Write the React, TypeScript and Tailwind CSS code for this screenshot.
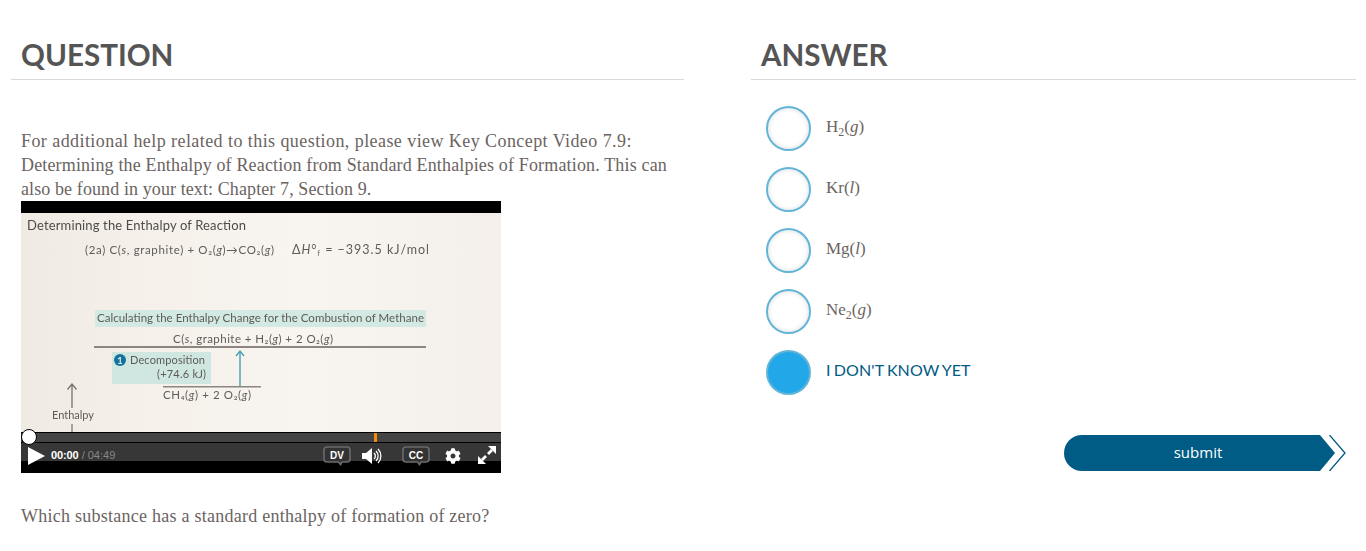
import React from 'react';
import { FaCog } from 'react-icons/fa';

const serif = "font-['Liberation_Serif',serif]";
const lato = "font-['Lato',sans-serif]";

const sub = (text: string) => (
  <sub className="text-[12px] leading-none relative top-[4px] align-baseline">{text}</sub>
);

const answers: { id: string; label: React.ReactNode }[] = [
  { id: 'h2', label: <>H{sub('2')}(<i>g</i>)</> },
  { id: 'kr', label: <>Kr(<i>l</i>)</> },
  { id: 'mg', label: <>Mg(<i>l</i>)</> },
  { id: 'ne', label: <>Ne{sub('2')}(<i>g</i>)</> },
];

function Picture() {
  const ink = '#5f5b56';
  return (
    <svg width="480" height="219" viewBox="0 12 480 219" className="block blur-[0.35px]" fontFamily="Lato, sans-serif">
      <defs>
        <linearGradient id="paper" x1="0" x2="1" y1="0" y2="0">
          <stop offset="0" stopColor="#efeae2" />
          <stop offset="0.25" stopColor="#f5f0e9" />
          <stop offset="0.6" stopColor="#f8f4f0" />
          <stop offset="1" stopColor="#f4efe9" />
        </linearGradient>
      </defs>
      <rect x="0" y="12" width="480" height="219" fill="url(#paper)" />
      <text x="6" y="29" fontSize="13" fill="#4f4b48" textLength="219">Determining the Enthalpy of Reaction</text>
      <text x="64" y="53" fontSize="11.5" fill={ink} textLength="189">
        (2a) C(<tspan fontStyle="italic">s</tspan>, graphite) + O₂(<tspan fontStyle="italic">g</tspan>)→CO₂(<tspan fontStyle="italic">g</tspan>)
      </text>
      <text x="271" y="53" fontSize="12.5" fill={ink} textLength="137">
        Δ<tspan fontStyle="italic">H</tspan>°<tspan fontSize="7" dy="2">f</tspan><tspan dy="-2"> = −393.5 kJ/mol</tspan>
      </text>
      <rect x="74" y="109" width="331" height="17" rx="1" fill="#d3e9e3" />
      <text x="76" y="121" fontSize="11.5" fill={ink} textLength="327">Calculating the Enthalpy Change for the Combustion of Methane</text>
      <text x="152" y="142" fontSize="11.5" fill={ink} textLength="160">
        C(<tspan fontStyle="italic">s</tspan>, graphite + H₂(<tspan fontStyle="italic">g</tspan>) + 2 O₂(<tspan fontStyle="italic">g</tspan>)
      </text>
      <rect x="73" y="145" width="332" height="2" fill="#8b8680" />
      <rect x="91" y="151" width="99" height="32" fill="#cfe6e1" />
      <circle cx="99" cy="159" r="6" fill="#14739b" />
      <text x="99" y="163" fontSize="10" fill="#fff" textAnchor="middle">1</text>
      <text x="109" y="163" fontSize="11" fill={ink} textLength="75">Decomposition</text>
      <text x="136" y="177" fontSize="11" fill={ink} textLength="49">(+74.6 kJ)</text>
      <path d="M219 186V151M215 155l4-5 4 5" stroke="#4a9fb5" strokeWidth="1.4" fill="none" />
      <rect x="142" y="185" width="98" height="1.5" fill="#8b8680" />
      <text x="142" y="198" fontSize="11.5" fill={ink} textLength="88">
        CH₄(<tspan fontStyle="italic">g</tspan>) + 2 O₂(<tspan fontStyle="italic">g</tspan>)
      </text>
      <path d="M51 207V183M46.500 188.500l4.500-5.500 4.500 5.500" stroke="#77726c" strokeWidth="1.300" fill="none" />
      <text x="31" y="218" fontSize="11" fill={ink} textLength="42">Enthalpy</text>
      <path d="M51 223V231" stroke="#77726c" strokeWidth="1.2" />
    </svg>
  );
}

function Bubble({ text }: { text: string }) {
  return (
    <svg className="-mt-[1px]" width="28" height="20" viewBox="0 0 28 20" fontFamily="Liberation Sans, sans-serif">
      <path d="M4 1h20a3 3 0 0 1 3 3v9a3 3 0 0 1-3 3h-5l-1.500 2.500-2-2.500H4a3 3 0 0 1-3-3V4a3 3 0 0 1 3-3z" fill="#333" stroke="#6b6b6b" strokeWidth="1.600" />
      <text x="14" y="12.500" fontSize="10" fontWeight="700" fill="#fff" textAnchor="middle">{text}</text>
    </svg>
  );
}

function VideoPlayer() {
  return (
    <div className="relative w-[480px] h-[272px] bg-black flex flex-col">
      <div className="h-3 shrink-0" />
      <Picture />
      {/* seek bar */}
      <div className="relative h-[11px] shrink-0 bg-[#444] border-y border-black">
        <div className="absolute left-[353px] top-0 w-[3px] h-[9px] bg-[#f58a0b]" />
      </div>
      {/* controls */}
      <div className="h-[18px] shrink-0 bg-[#373737]" />
      <div className="h-3 shrink-0" />
      <div className="absolute left-0 top-[228px] w-4 h-4 rounded-full bg-white border border-black" />
      <div className="absolute left-[7px] right-[4px] top-[245px] flex items-center h-[20px] whitespace-nowrap">
        <svg width="17" height="18" viewBox="0 0 17 18"><path d="M0 0L17 9L0 18Z" fill="#fff" /></svg>
        <span className="ml-[6px] -mt-[2px] text-[11px] tracking-[-0.1px] font-['Liberation_Sans',sans-serif] font-bold text-white">00:00</span>
        <span className="ml-[3px] -mt-[2px] text-[11px] font-['Liberation_Sans',sans-serif] text-[#888]">/ 04:49</span>
        <div className="ml-auto flex items-center">
          <Bubble text="DV" />
          <svg className="ml-[10px]" width="22" height="20" viewBox="0 0 22 20" fill="none">
            <path d="M1 7h4l6-5v16l-6-5H1z" fill="#fff" />
            <path d="M13 7a4 4 0 0 1 0 6M15 5a7 7 0 0 1 0 10M17 3a10 10 0 0 1 0 14" stroke="#fff" strokeWidth="1.300" />
          </svg>
          <div className="ml-[19px]"><Bubble text="CC" /></div>
          <FaCog className="ml-[15px] text-white" size={16} />
          <svg className="ml-[16px] -mt-[2px]" width="20" height="20" viewBox="0 0 20 20" fill="#fff" stroke="none">
            <path d="M11 1h8v8z" />
            <path d="M1 11v8h8z" />
            <path d="M15 5l-4 4M5 15l4-4" stroke="#fff" strokeWidth="2.800" />
          </svg>
        </div>
      </div>
    </div>
  );
}

function Radio({ selected }: { selected?: boolean }) {
  return (
    <div
      className={
        selected
          ? 'w-[45px] h-[45px] rounded-full border-2 border-[#62b5d8] bg-[#22a7e8] shrink-0'
          : 'w-[45px] h-[45px] rounded-full border-2 border-[#62b5d8] bg-white shadow-[inset_0_0_5px_rgba(0,0,0,0.15)] shrink-0'
      }
    />
  );
}

function SubmitButton() {
  return (
    <button className="flex items-center h-9 w-[282px]">
      <span className="flex-1 h-full bg-[#005b85] rounded-l-[18px] flex items-center justify-center pl-[12px] pb-[2px] text-white text-[15px] font-medium font-['Open_Sans',sans-serif]">
        submit
      </span>
      <svg width="26" height="36" viewBox="0 0 26 36" className="shrink-0" fill="none">
        <path d="M0 0L15 18L0 36Z" fill="#005b85" />
        <path d="M9.500 0L25 18L9.500 36" stroke="#005b85" strokeWidth="1.300" />
      </svg>
    </button>
  );
}

export default function App() {
  return (
    <div className="h-[551px] w-[1366px] overflow-hidden bg-white flex pl-[11px] pt-[33px]">
      {/* Question column */}
      <div className="w-[673px] shrink-0">
        <h2 className={`${lato} font-bold text-[29.600px] leading-[44px] pb-[2px] pl-[10px] text-[#555] border-b border-[#d9d9d9]`}>QUESTION</h2>
        <div className={`${serif} pl-[10px] text-[18px] text-[#6b6461]`}>
          <div className="mt-[49px] leading-[24px] whitespace-nowrap">
            <p className="tracking-[0.43px]">For additional help related to this question, please view Key Concept Video 7.9:</p>
            <p className="tracking-[0.16px]">Determining the Enthalpy of Reaction from Standard Enthalpies of Formation. This can</p>
            <p className="tracking-[0.1px]">also be found in your text: Chapter 7, Section 9.</p>
          </div>
          <VideoPlayer />
          <p className="mt-[31px] leading-[24px] tracking-[0.25px]">Which substance has a standard enthalpy of formation of zero?</p>
        </div>
      </div>

      {/* Answer column */}
      <div className="ml-[67px] w-[605px] shrink-0">
        <h2 className={`${lato} font-bold text-[29.600px] leading-[44px] pb-[2px] pl-[10px] text-[#555] border-b border-[#d9d9d9]`}>ANSWER</h2>
        <div className="mt-[26px] pl-[15px] flex flex-col gap-4">
          {answers.map((a) => (
            <div key={a.id} className="flex items-center gap-[15px] h-[45px]">
              <Radio />
              <span className={`${serif} text-[17px] text-[#6b6461] -mt-[4px]`}>{a.label}</span>
            </div>
          ))}
          <div className="flex items-center gap-[15px] h-[45px]">
            <Radio selected />
            <span className={`${lato} text-[16px] tracking-[0.1px] [word-spacing:-1px] text-[#005b85] -mt-[6px]`}>I DON'T KNOW YET</span>
          </div>
        </div>
        <div className="mt-[40px] pl-[313px]">
          <SubmitButton />
        </div>
      </div>
    </div>
  );
}
